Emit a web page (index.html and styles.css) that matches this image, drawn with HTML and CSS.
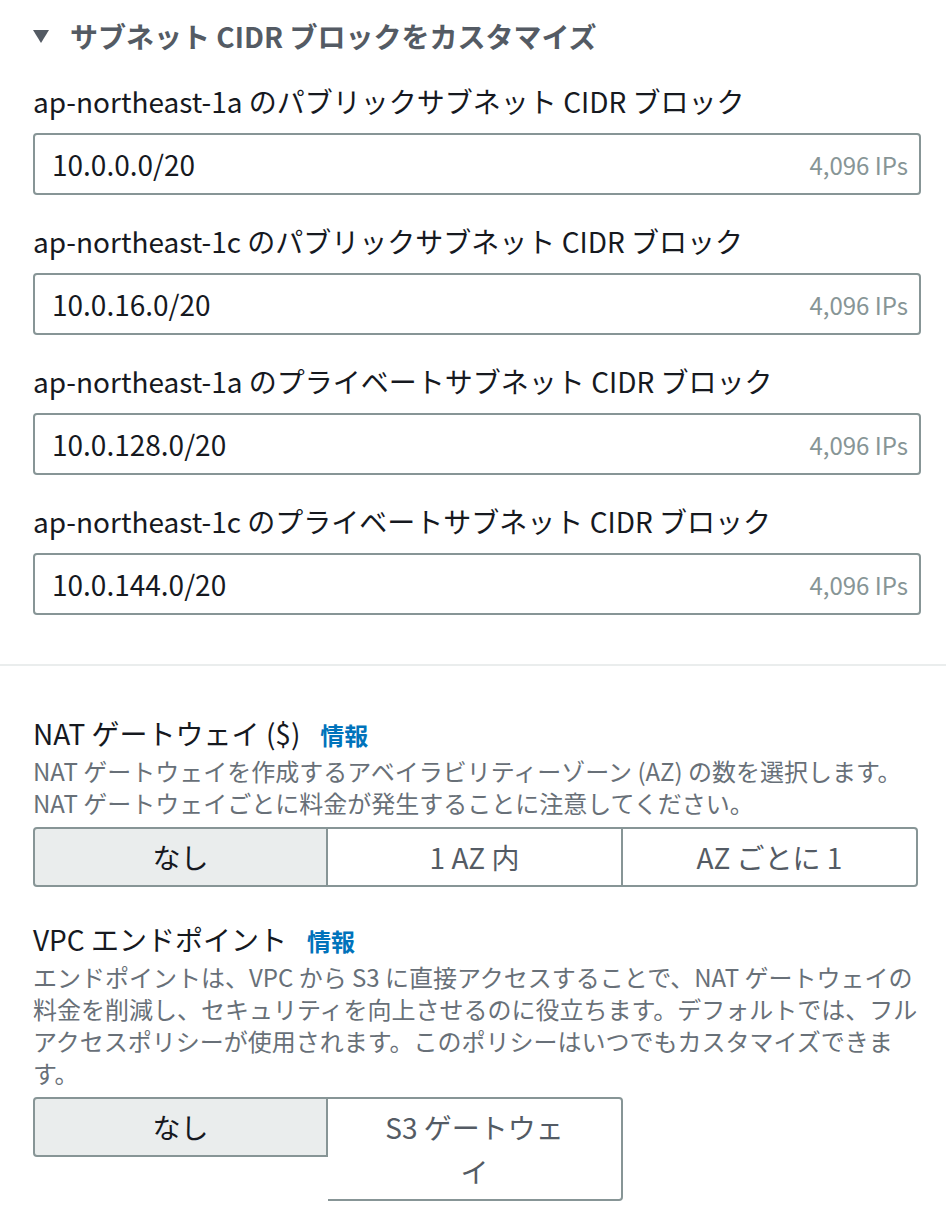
FILE: index.html
```html
<!DOCTYPE html>
<html lang="ja">
<head>
<meta charset="utf-8">
<link rel="stylesheet" href="styles.css">
</head>
<body>
<section class="subnets">
  <div class="expander">
    <svg class="caret" width="16" height="13" viewBox="0 0 16 13"><polygon points="0,0 16,0 8,13" fill="#545b64"/></svg>
    <span>サブネット CIDR ブロックをカスタマイズ</span>
  </div>
  <div class="field">
    <div class="label">ap-northeast-1a のパブリックサブネット CIDR ブロック</div>
    <div class="input"><span>10.0.0.0/20</span><span class="ips">4,096 IPs</span></div>
  </div>
  <div class="field">
    <div class="label">ap-northeast-1c のパブリックサブネット CIDR ブロック</div>
    <div class="input"><span>10.0.16.0/20</span><span class="ips">4,096 IPs</span></div>
  </div>
  <div class="field">
    <div class="label">ap-northeast-1a のプライベートサブネット CIDR ブロック</div>
    <div class="input"><span>10.0.128.0/20</span><span class="ips">4,096 IPs</span></div>
  </div>
  <div class="field">
    <div class="label">ap-northeast-1c のプライベートサブネット CIDR ブロック</div>
    <div class="input"><span>10.0.144.0/20</span><span class="ips">4,096 IPs</span></div>
  </div>
</section>
<hr class="divider">
<section class="options">
  <div class="group nat">
    <div class="title">NAT ゲートウェイ ($)<a class="info">情報</a></div>
    <div class="desc">NAT ゲートウェイを作成するアベイラビリティーゾーン (AZ) の数を選択します。<br>NAT ゲートウェイごとに料金が発生することに注意してください。</div>
    <div class="segmented">
      <div class="seg selected">なし</div>
      <div class="seg">1 AZ 内</div>
      <div class="seg">AZ ごとに 1</div>
    </div>
  </div>
  <div class="group vpc">
    <div class="title">VPC エンドポイント<a class="info">情報</a></div>
    <div class="desc">エンドポイントは、VPC から S3 に直接アクセスすることで、NAT ゲートウェイの料金を削減し、セキュリティを向上させるのに役立ちます。デフォルトでは、フルアクセスポリシーが使用されます。このポリシーはいつでもカスタマイズできます。</div>
    <div class="segmented">
      <div class="seg selected">なし</div>
      <div class="seg">S3 ゲートウェイ</div>
    </div>
  </div>
</section>
</body>
</html>
```
FILE: styles.css
```css
html, body {
  margin: 0;
  padding: 0;
  background: #ffffff;
}
body {
  font-family: "Noto Sans CJK JP", "Noto Sans", sans-serif;
  color: #16191f;
  width: 946px;
}
.subnets {
  padding: 14px 25px 0 33px;
}
.expander {
  display: flex;
  align-items: center;
  gap: 21px;
  height: 44px;
  font-size: 28px;
  font-weight: 700;
  color: #545b64;
}
.caret {
  flex: none;
  margin-top: 1px;
}
.field {
  margin-top: 21px;
}
.field + .field {
  margin-top: 24px;
}
.label {
  font-size: 28px;
  line-height: 44px;
  color: #16191f;
}
.input {
  margin-top: 10px;
  height: 62px;
  box-sizing: border-box;
  border: 2px solid #879596;
  border-radius: 4px;
  padding: 0 11px 0 17px;
  display: flex;
  align-items: center;
  justify-content: space-between;
  font-size: 28px;
  color: #16191f;
}
.ips {
  font-size: 24px;
  color: #879596;
}
.divider {
  margin: 49px 0 0 0;
  border: none;
  height: 2px;
  background: #eaeded;
}
.options {
  padding: 47px 23px 0 33px;
}
.group + .group {
  margin-top: 32px;
}
.title {
  font-size: 28px;
  line-height: 40px;
  color: #16191f;
}
.info {
  margin-left: 20px;
  font-size: 24px;
  font-weight: 700;
  color: #0073bb;
}
.desc {
  margin-top: 0;
  font-size: 24px;
  line-height: 32px;
  color: #687078;
}
.segmented {
  margin-top: 8px;
  display: flex;
  align-items: flex-start;
}
.seg {
  width: 295px;
  box-sizing: border-box;
  border: 2px solid #879596;
  border-left: none;
  padding: 6px 48px;
  font-size: 28px;
  line-height: 44px;
  text-align: center;
  color: #545b64;
  background: #ffffff;
}
.seg:first-child {
  border-left: 2px solid #879596;
  border-radius: 4px 0 0 4px;
}
.seg:last-child {
  border-radius: 0 4px 4px 0;
}
.seg.selected {
  background: #eaeded;
  color: #16191f;
}
```
